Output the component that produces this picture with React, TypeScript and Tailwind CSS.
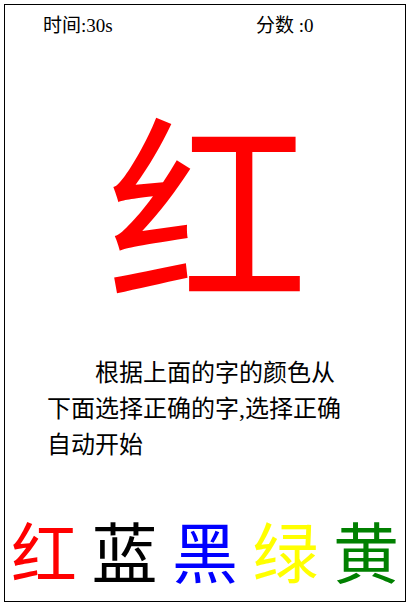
import React from "react";

export default function App() {
  const choices: { t: string; c: string }[] = [
    { t: "红", c: "text-[#ff0000]" },
    { t: "蓝", c: "text-[#000000]" },
    { t: "黑", c: "text-[#0000ff]" },
    { t: "绿", c: "text-[#ffff00]" },
    { t: "黄", c: "text-[#008000]" },
  ];
  return (
    <div className="bg-white w-[410px] h-[609px] p-[4px] font-['Liberation_Serif','Noto_Sans_CJK_SC',serif]">
      <div className="border border-black h-[598px] w-[402px] flex flex-col text-black">
        <div className="flex h-[42px] items-center text-[19px] pt-[1px]">
          <span className="ml-[38px] w-[213px]">时间:30s</span>
          <span>分数 :0</span>
        </div>
        <div className="h-[290px] flex items-start justify-center">
          <span className="text-[202px] leading-none text-[#ff0000] mt-[72px] ml-[5px]">红</span>
        </div>
        <div className="ml-[42px] w-[304px] text-[24px] leading-[36px] indent-[48px] mt-[18px]">
          根据上面的字的颜色从下面选择正确的字,选择正确自动开始
        </div>
        <div className="flex-1" />
        <div className="flex justify-between px-[6px] mb-[12px]">
          {choices.map((ch) => (
            <span key={ch.t} className={`text-[66px] leading-none ${ch.c}`}>
              {ch.t}
            </span>
          ))}
        </div>
      </div>
    </div>
  );
}
